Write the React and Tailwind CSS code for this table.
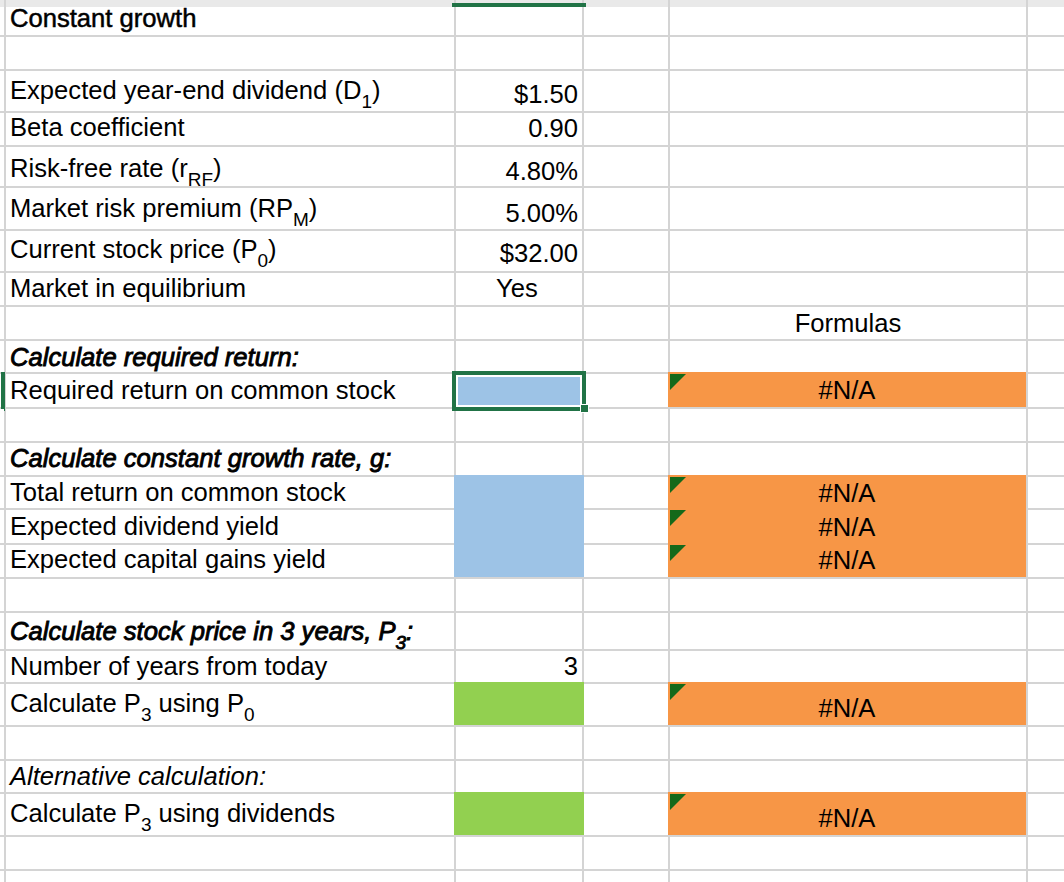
const Sub = ({ children }) => (
  <span className="relative top-[7px] text-[19px] leading-none">{children}</span>
);

const Tri = () => (
  <svg className="absolute left-[2px] top-[2px]" width="16" height="16" viewBox="0 0 16 16">
    <polygon points="0,0 16,0 0,16" fill="#15691a" />
  </svg>
);

// one entry per sheet row, top to bottom
const rows = [
  { a: "Constant growth", apb: "pb-[3px]", title: true },
  {},
  { a: <>Expected year-end dividend (D<Sub>1</Sub>)</>, apb: "pb-[7px]", b: "$1.50", bpb: "pb-[3px]" },
  { a: "Beta coefficient", apb: "pb-[4px]", b: "0.90", bpb: "pb-[3px]" },
  { a: <>Risk-free rate (r<Sub>RF</Sub>)</>, apb: "pb-[4px]", b: "4.80%", bpb: "pb-[1px]" },
  { a: <>Market risk premium (RP<Sub>M</Sub>)</>, apb: "pb-[7px]", b: "5.00%", bpb: "pb-[2px]" },
  { a: <>Current stock price (P<Sub>0</Sub>)</>, apb: "pb-[8px]", b: "$32.00", bpb: "pb-[4px]" },
  { a: "Market in equilibrium", apb: "pb-[3px]", b: "Yes", bpb: "pb-[3px]", center: true },
  { d: "Formulas", dpb: "pb-[2px]" },
  { a: "Calculate required return:", apb: "pb-[1px]", head: true },
  { a: "Required return on common stock", apb: "pb-[3px]", sel: true, na: true, dpb: "pb-[3px]" },
  {},
  { a: "Calculate constant growth rate, g:", apb: "pb-[3px]", head: true },
  { a: "Total return on common stock", apb: "pb-[2px]", fill: "blue", na: true, dpb: "pb-[1px]" },
  { a: "Expected dividend yield", apb: "pb-[3px]", fill: "blue", na: true, dpb: "pb-[2px]" },
  { a: "Expected capital gains yield", apb: "pb-[4px]", fill: "blue", na: true, dpb: "pb-[3px]" },
  {},
  { a: <>Calculate stock price in 3 years, P<Sub>3</Sub>:</>, apb: "pb-[4px]", head: true },
  { a: "Number of years from today", apb: "pb-[2px]", b: "3", bpb: "pb-[2px]" },
  { a: <>Calculate P<Sub>3</Sub> using P<Sub>0</Sub></>, apb: "pb-[8px]", fill: "green", na: true, dpb: "pb-[3px]" },
  {},
  { a: "Alternative calculation:", apb: "pb-[2px]", italic: true },
  { a: <>Calculate P<Sub>3</Sub> using dividends</>, apb: "pb-[8px]", fill: "green", na: true, dpb: "pb-[3px]" },
  {},
  {},
];

function BCell({ r }) {
  if (r.sel) {
    return (
      <div className="relative bg-[#9dc3e6]">
        <div className="absolute -left-[4px] -right-[4px] -top-[3px] -bottom-[4px] border-4 border-[#217346]">
          <div className="h-full w-full border-2 border-white" />
        </div>
        <div className="absolute -right-[7px] -bottom-[6px] h-[9px] w-[9px] border border-white bg-[#217346]" />
      </div>
    );
  }
  if (r.fill === "blue") return <div className="-mx-[2px] -mt-[2px] bg-[#9dc3e6]" />;
  if (r.fill === "green") return <div className="-mx-[2px] -mt-[2px] bg-[#92d050]" />;
  return (
    <div className={`flex items-end bg-white pr-[4px] ${r.center ? "justify-center" : "justify-end"} ${r.bpb || ""}`}>
      {r.b}
    </div>
  );
}

function DCell({ r }) {
  if (r.na) {
    return (
      <div className={`relative -ml-[2px] -mt-[2px] flex items-end justify-center bg-[#f79646] ${r.dpb}`}>
        <Tri />
        #N/A
      </div>
    );
  }
  return <div className={`flex items-end justify-center bg-white ${r.dpb || ""}`}>{r.d}</div>;
}

function Row({ r }) {
  const style = r.head
    ? "italic [-webkit-text-stroke:0.9px_#000]"
    : r.italic
    ? "italic"
    : r.title
    ? "[-webkit-text-stroke:0.5px_#000]"
    : "";
  return (
    <>
      <div className="relative bg-white">
        {r.sel && <div className="absolute left-[1px] -right-[1px] -top-[2px] -bottom-[4px] bg-[#217346]" />}
      </div>
      <div className={`flex items-end whitespace-pre bg-white pl-[4px] ${r.apb || ""} ${style}`}>{r.a}</div>
      <BCell r={r} />
      <div className="bg-white" />
      <DCell r={r} />
      <div className="bg-white" />
    </>
  );
}

export default function App() {
  return (
    <div className="h-[882px] overflow-hidden bg-white font-['Liberation_Sans',Arial,sans-serif] text-[25.6px] leading-[28px] text-black">
      <div className="grid grid-cols-[4px_448px_126px_84px_356px_1fr] grid-rows-[5px_28px_32px_40px_32px_39px_41px_40px_32px_32px_31px_33px_32px_32px_31px_33px_32px_32px_36px_31px_41px_32px_31px_41px_32px_40px] gap-[2px] bg-[#d4d4d4]">
        <div className="-mb-[2px] bg-[#e9e9e9]" />
        <div className="-mb-[2px] bg-[#e9e9e9]" />
        <div className="relative -mb-[2px] bg-[#e9e9e9]">
          <div className="absolute -left-[4px] -right-[4px] bottom-0 h-[4px] bg-[#217346]" />
        </div>
        <div className="-mb-[2px] bg-[#e9e9e9]" />
        <div className="-mb-[2px] bg-[#e9e9e9]" />
        <div className="-mb-[2px] bg-[#e9e9e9]" />
        {rows.map((r, i) => (
          <Row key={i} r={r} />
        ))}
      </div>
    </div>
  );
}
